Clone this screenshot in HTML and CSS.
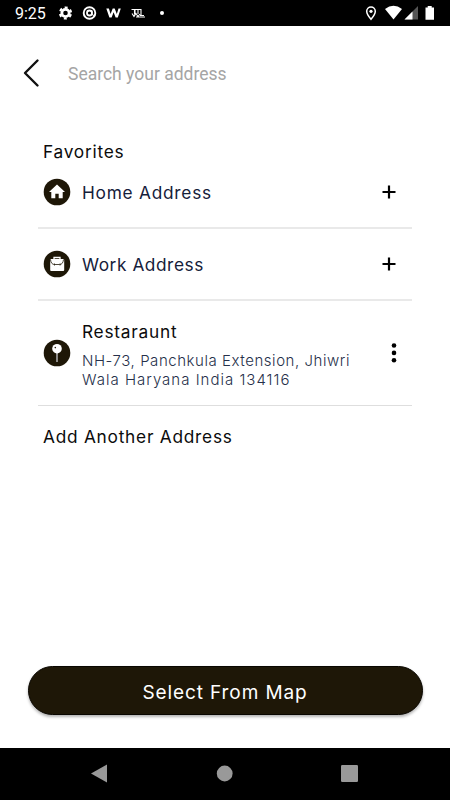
FILE: index.html
```html
<!DOCTYPE html>
<html lang="en">
<head>
  <meta charset="UTF-8" />
  <meta name="viewport" content="width=device-width, initial-scale=1" />
  <title>Select Address</title>
  <link rel="stylesheet" href="styles.css">
</head>
<body>
  <div class="status-bar">
    <span class="clock">9:25</span>
    <svg class="status-left" width="112" height="26" viewBox="0 0 112 26">
      <g fill="none" stroke="#fff">
        <circle cx="9.5" cy="13" r="3.7" stroke-width="2.8" />
        <circle cx="9.5" cy="13" r="5.6" stroke-width="2" stroke-dasharray="3 2.864" stroke-dashoffset="-1.4" />
        <circle cx="33.5" cy="13" r="5.8" stroke-width="1.9" />
        <circle cx="33.5" cy="13" r="2.5" stroke-width="1.8" />
        <path d="M36 10.5v4l2 1" stroke-width="1" />
        <path d="M75.5 9.5h3v5M79 14V9.500h3V14M82.500 9.500h2.500v6M76 13.500l2 3 2-3 2 3 2-2.500M80 17h9M84 15.500h4" stroke-width="1.100" />
      </g>
      <path d="M50.300 8.500h2.600l1.700 5.600 2.100-5.600h2l2.100 5.600 1.700-5.600h2.300l-3 9h-2.200l-2-5.200-2 5.200h-2.200z" fill="#fff" />
      <circle cx="106" cy="13" r="2" fill="#fff" />
    </svg>
    <svg class="status-right" width="70" height="26" viewBox="0 0 70 26">
      <path d="M6 7a4.300 4.300 0 0 0-4.300 4.300C1.700 14.500 6 19.300 6 19.300s4.300-4.800 4.300-8A4.300 4.300 0 0 0 6 7z" fill="none" stroke="#fff" stroke-width="1.500" />
      <circle cx="6" cy="11.300" r="1.600" fill="#fff" />
      <path d="M20 9q8.500-6.500 17 0l-8.500 10.500z" fill="#fff" />
      <path d="M39.500 19.500L53 6v13.500z" fill="#555" />
      <path d="M39.500 19.500L47.500 11.500v8z" fill="#fff" />
      <path d="M62.700 6h4v1.500h2.300v12.300h-8.500V7.500h2.200z" fill="#fff" />
    </svg>
  </div>

  <div class="search">
    <svg class="back" width="18" height="30" viewBox="0 0 18 30">
      <path d="M15.500 2.500L3 15L15.500 27.500" />
    </svg>
    <span class="placeholder">Search your address</span>
  </div>

  <div class="content">
    <h1>Favorites</h1>

    <div class="item home">
      <svg class="icon" width="28" height="28" viewBox="0 0 28 28">
        <circle class="disc" cx="14" cy="14" r="13.300" />
        <path d="M14 6.500L6 14h2.300v6.200h4v-4.500h3.400v4.500h4V14H22z" fill="#fff" />
      </svg>
      <span class="name">Home Address</span>
      <svg class="action" width="14" height="14" viewBox="0 0 14 14">
        <path d="M7 .5v13M.5 7h13" />
      </svg>
    </div>

    <div class="item work">
      <svg class="icon" width="28" height="28" viewBox="0 0 28 28">
        <circle class="disc" cx="14" cy="14" r="13.300" />
        <path d="M11 9V7.500h6V9" fill="none" stroke="#fff" stroke-width="1.300" />
        <rect x="7.200" y="9" width="14" height="12" rx="1" fill="#fff" />
        <path d="M7.500 9.500q.5 5 4 5h5q3.500 0 4-5M11.500 13.500v2M17 13.500v2" fill="none" stroke="#1e1707" stroke-width=".8" />
      </svg>
      <span class="name">Work Address</span>
      <svg class="action" width="14" height="14" viewBox="0 0 14 14">
        <path d="M7 .5v13M.5 7h13" />
      </svg>
    </div>

    <div class="item saved">
      <svg class="icon" width="28" height="28" viewBox="0 0 28 28">
        <circle class="disc" cx="14" cy="14" r="13.300" />
        <path d="M14 13v10" stroke="#aaa" stroke-width="1.600" />
        <circle cx="14" cy="9.700" r="4.800" fill="#fff" />
        <circle cx="12.300" cy="8.600" r=".8" fill="#1e1707" />
      </svg>
      <div class="details">
        <div class="name">Restaraunt</div>
        <div class="address">NH-73, Panchkula Extension, Jhiwri</div>
        <div class="address second">Wala Haryana India 134116</div>
      </div>
      <svg class="more" width="6" height="22" viewBox="0 0 6 22">
        <circle cx="3" cy="3.500" r="2.300" />
        <circle cx="3" cy="10.900" r="2.300" />
        <circle cx="3" cy="18.300" r="2.300" />
      </svg>
    </div>

    <div class="add">Add Another Address</div>
  </div>

  <div class="footer">
    <button>Select From Map</button>
  </div>

  <div class="nav-bar">
    <svg width="450" height="52" viewBox="0 0 450 52" fill="#999">
      <path d="M91 25.500L107 16.500v18z" />
      <circle cx="224.700" cy="25.500" r="7.900" />
      <rect x="341" y="17" width="17" height="17" rx="1.200" />
    </svg>
  </div>
</body>
</html>
```
FILE: styles.css
```css
body {
  display: flex;
  flex-direction: column;
  height: 800px;
  margin: 0;
  background-color: #fff;
  color: #0b0b0b;
  font-family: Inter, sans-serif;
  overflow: hidden;
}

svg {
  display: block;
  flex: none;
}

.status-bar {
  display: flex;
  align-items: center;
  height: 26px;
  background-color: #000;
}

.clock {
  width: 40px;
  margin-left: 15px;
  padding-top: 2px;
  color: #fff;
  font: 16px/24px Roboto, sans-serif;
}

.status-left {
  margin-left: 1px;
}

.status-right {
  margin-left: auto;
  margin-right: 15px;
}

.search {
  display: flex;
  align-items: center;
  height: 94px;
  padding-left: 22px;
}

.back {
  fill: none;
  stroke: #111;
  stroke-width: 2.4;
  stroke-linecap: round;
  stroke-linejoin: round;
}

.placeholder {
  margin-left: 28px;
  padding-top: 2px;
  color: #a5a5a5;
  font: 17.5px/24px Roboto, sans-serif;
}

.content {
  flex: 1;
  padding: 0 38px;
}

h1,
.name,
.add {
  font-size: 17.3px;
  font-weight: 400;
  line-height: 24px;
  letter-spacing: 0.75px;
}

h1 {
  height: 36px;
  margin: 0;
  padding: 20px 0 0 5px;
  box-sizing: border-box;
}

.item {
  display: flex;
  align-items: center;
  height: 72px;
  padding-left: 5px;
  box-sizing: border-box;
  background: linear-gradient(#e9e9e9, #e9e9e9) bottom / 100% 2px no-repeat;
}

.home {
  height: 73px;
  padding-bottom: 1px;
}

.work {
  padding-bottom: 2px;
}

.home .name,
.work .name {
  padding-top: 2px;
  color: #15203a;
}

.work .name {
  letter-spacing: 0.55px;
}

.saved {
  height: 105px;
  padding-bottom: 2px;
  background: linear-gradient(#dedede, #dedede) bottom / 100% 1px no-repeat;
}

.disc {
  fill: #1e1707;
}

.details,
.item > .name {
  flex: 1;
  margin-left: 11px;
}

.details {
  padding-top: 4px;
}

.details .name {
  margin-bottom: 7px;
}

.action {
  margin-right: 16px;
  stroke: #000;
  stroke-width: 2.2;
}

.more {
  margin-right: 15px;
}

.address {
  color: #26304a;
  font-size: 15px;
  font-weight: 300;
  line-height: 19px;
  letter-spacing: 0.55px;
  white-space: nowrap;
}

.second {
  letter-spacing: 1px;
}

.add {
  padding: 19px 0 0 5px;
}

.footer {
  height: 82px;
  padding: 0 27.5px;
}

button {
  width: 100%;
  height: 49px;
  padding: 3px 0 0;
  border: 1px solid #090600;
  border-radius: 25px;
  background-color: #1e1707;
  box-shadow: 0 2px 3px rgba(0, 0, 0, 0.3);
  color: #fff;
  font-family: Inter, sans-serif;
  font-size: 19px;
  letter-spacing: 0.9px;
}

.nav-bar {
  height: 52px;
  background-color: #000;
}
```
